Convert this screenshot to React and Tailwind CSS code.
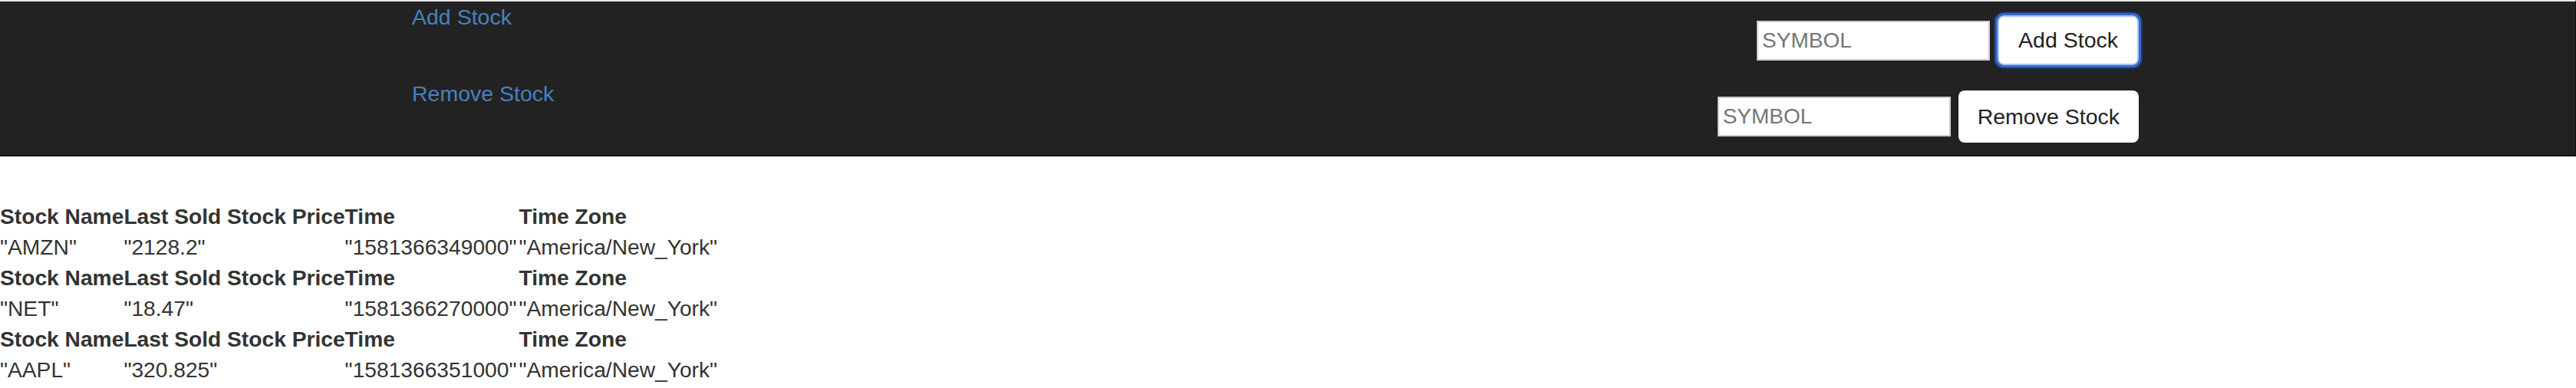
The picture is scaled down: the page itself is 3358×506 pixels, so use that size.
import React, { useState } from 'react';

const STOCKS = [
  { symbol: 'AMZN', price: '2128.2', time: '1581366349000', zone: 'America/New_York' },
  { symbol: 'NET', price: '18.47', time: '1581366270000', zone: 'America/New_York' },
  { symbol: 'AAPL', price: '320.825', time: '1581366351000', zone: 'America/New_York' },
];

const font = { fontFamily: '"Liberation Sans", Arial, sans-serif' };

function StockForm({ label, focused }) {
  const [symbol, setSymbol] = useState('');
  return (
    <form className="flex items-center gap-[10px]" onSubmit={(e) => e.preventDefault()}>
      <input
        value={symbol}
        onChange={(e) => setSymbol(e.target.value)}
        placeholder="SYMBOL"
        className="w-[304px] h-[52px] bg-white border-2 border-[#cdcdcd] pl-[5px] text-[28px] text-[#222] placeholder:text-[#757575] outline-none"
      />
      <button
        type="submit"
        className={
          focused
            ? 'h-[65px] px-[25px] bg-white rounded-[8px] text-[28.5px] text-[#222] border-2 border-[#a9c6f3] outline-3 outline-[#3768cc] shadow-[0_0_0_5px_#1e3763]'
            : 'h-[68px] px-[25px] bg-white rounded-[8px] text-[28.5px] text-[#222]'
        }
      >
        {label}
      </button>
    </form>
  );
}

export default function App() {
  return (
    <div className="min-h-screen bg-white text-[#333]" style={font}>
      <nav className="bg-[#222] border-t-2 border-t-[#e6e6e6] border-b-2 border-b-[#080808] border-r border-r-[#111]">
        <div className="ml-[537px] w-[2251px] flex flex-col">
          <div className="h-[100px] flex justify-between items-start">
            <a href="#" className="text-[28.5px] leading-[40px] text-[#4682c0]">Add Stock</a>
            <div className="mt-[18px]">
              <StockForm label="Add Stock" focused />
            </div>
          </div>
          <div className="h-[100px] flex justify-between items-start">
            <a href="#" className="text-[28.5px] leading-[40px] text-[#4682c0]">Remove Stock</a>
            <div className="mt-[16px]">
              <StockForm label="Remove Stock" />
            </div>
          </div>
        </div>
      </nav>

      <table className="mt-[58px] border-collapse text-[28.2px] leading-[40px] text-[#333]">
        <tbody>
          {STOCKS.map((s) => (
            <React.Fragment key={s.symbol}>
              <tr className="font-bold">
                <th className="p-0 text-left">Stock Name</th>
                <th className="p-0 text-left">Last Sold Stock Price</th>
                <th className="p-0 text-left">Time</th>
                <th className="p-0 text-left">Time Zone</th>
              </tr>
              <tr>
                <td className="p-0">"{s.symbol}"</td>
                <td className="p-0">"{s.price}"</td>
                <td className="p-0 pr-[3px]">"{s.time}"</td>
                <td className="p-0">"{s.zone}"</td>
              </tr>
            </React.Fragment>
          ))}
        </tbody>
      </table>
    </div>
  );
}
